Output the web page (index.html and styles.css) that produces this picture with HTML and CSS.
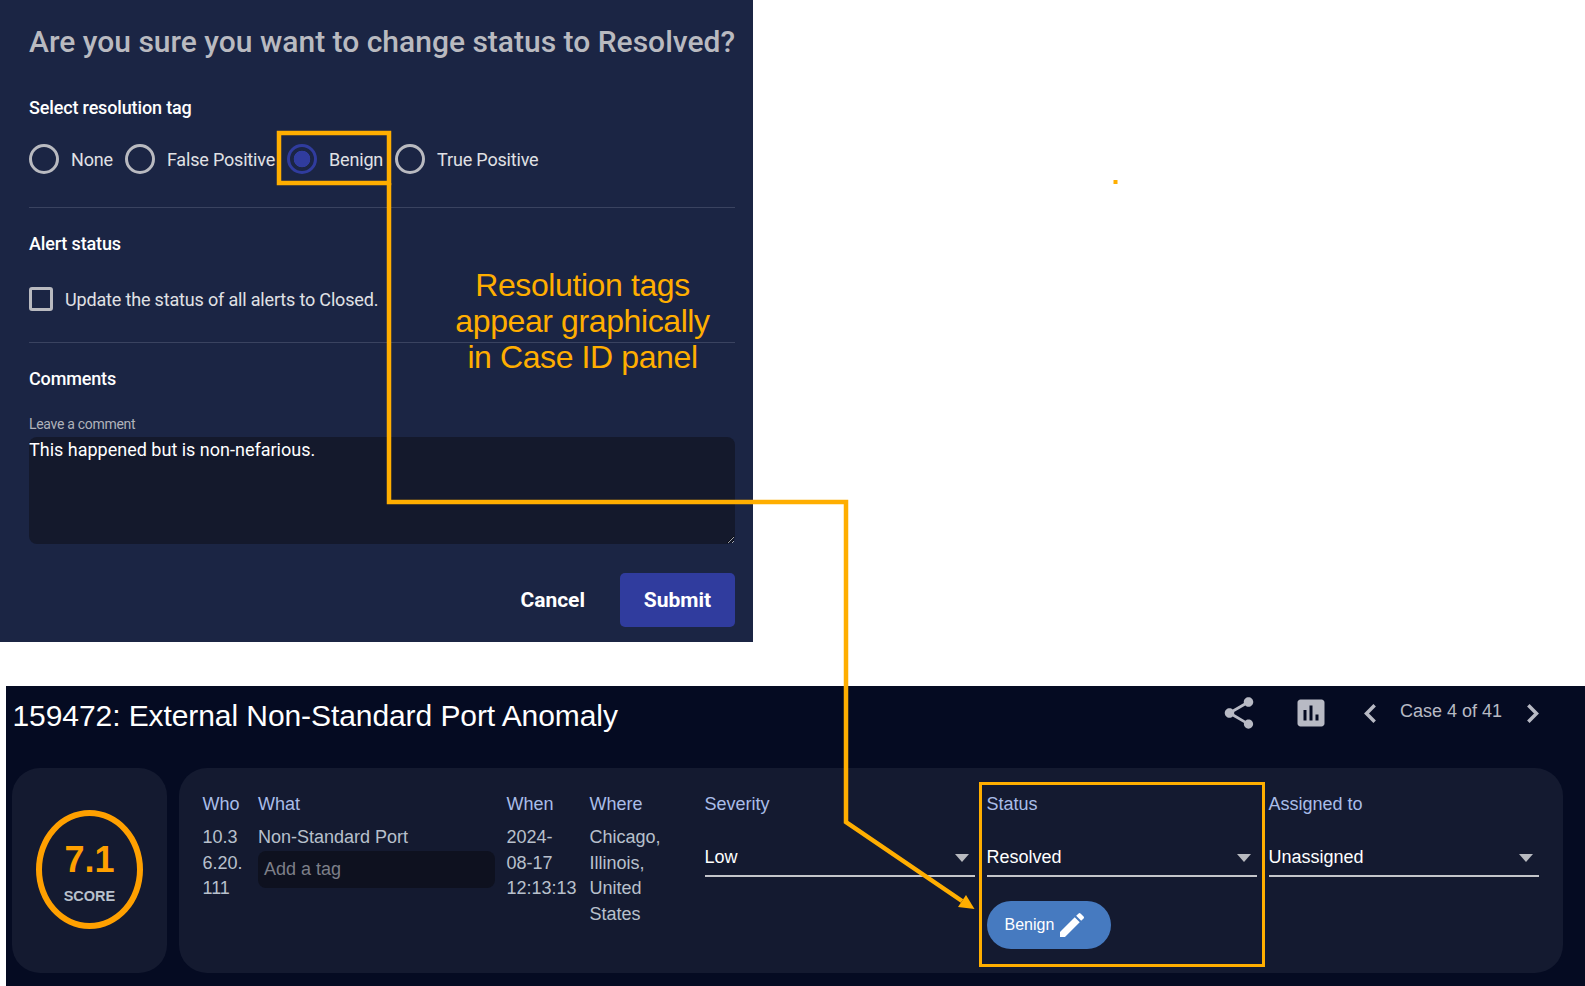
FILE: index.html
```html
<!DOCTYPE html>
<html lang="en">
<head>
<meta charset="utf-8">
<title>Change status</title>
<link rel="stylesheet" href="styles.css">
</head>
<body>
<section class="dialog">
  <h2 class="dialog-title">Are you sure you want to change status to Resolved?</h2>
  <h3 class="section-label first">Select resolution tag</h3>
  <div class="radios">
    <label class="radio"><span class="radio-dot"></span>None</label>
    <label class="radio"><span class="radio-dot"></span>False Positive</label>
    <label class="radio"><span class="radio-dot checked"></span>Benign</label>
    <label class="radio"><span class="radio-dot"></span>True Positive</label>
  </div>
  <hr class="rule">
  <h3 class="section-label">Alert status</h3>
  <label class="check"><span class="check-box"></span>Update the status of all alerts to Closed.</label>
  <hr class="rule">
  <h3 class="section-label">Comments</h3>
  <div class="field-label">Leave a comment</div>
  <textarea class="comment">This happened but is non-nefarious.</textarea>
  <div class="actions">
    <button class="btn-text">Cancel</button>
    <button class="btn-primary">Submit</button>
  </div>
</section>

<section class="case">
  <header class="case-head">
    <h1 class="case-title">159472: External Non-Standard Port Anomaly</h1>
    <div class="case-tools">
      <svg class="icon-share" viewBox="0 0 24 24"><path d="M18 16.08c-.76 0-1.44.3-1.96.77L8.91 12.7c.05-.23.09-.46.09-.7s-.04-.47-.09-.7l7.05-4.11c.54.5 1.25.81 2.04.81 1.66 0 3-1.34 3-3s-1.34-3-3-3-3 1.34-3 3c0 .24.04.47.09.7L8.04 9.81C7.5 9.31 6.79 9 6 9c-1.66 0-3 1.34-3 3s1.34 3 3 3c.79 0 1.5-.31 2.04-.81l7.12 4.16c-.05.21-.08.43-.08.65 0 1.61 1.31 2.92 2.92 2.92 1.61 0 2.92-1.31 2.92-2.92s-1.31-2.92-2.92-2.92z"/></svg>
      <svg class="icon-poll" viewBox="0 0 24 24"><path d="M19 3H5c-1.1 0-2 .9-2 2v14c0 1.1.9 2 2 2h14c1.1 0 2-.9 2-2V5c0-1.1-.9-2-2-2zM9 17H7v-7h2v7zm4 0h-2V7h2v10zm4 0h-2v-4h2v4z"/></svg>
      <svg class="icon-chev left" viewBox="0 0 12 18"><path d="M10 2 3 9l7 7"/></svg>
      <span class="case-count">Case 4 of 41</span>
      <svg class="icon-chev right" viewBox="0 0 12 18"><path d="m2 2 7 7-7 7"/></svg>
    </div>
  </header>
  <div class="case-body">
    <div class="score-card">
      <div class="score-ring">
        <span class="score-num">7.1</span>
        <span class="score-cap">SCORE</span>
      </div>
    </div>
    <div class="info-card">
      <div class="col who"><div class="col-head">Who</div><div class="col-text">10.3 6.20.111</div></div>
      <div class="col"><div class="col-head">What</div><div class="col-text">Non-Standard Port</div><div class="tag-input">Add a tag</div></div>
      <div class="col"><div class="col-head">When</div><div class="col-text">2024-08-17 12:13:13</div></div>
      <div class="col"><div class="col-head">Where</div><div class="col-text">Chicago, Illinois, United States</div></div>
      <div class="col"><div class="col-head">Severity</div><div class="select">Low</div></div>
      <div class="col"><div class="col-head">Status</div><div class="select">Resolved</div>
        <div class="pill">Benign<svg class="icon-edit" viewBox="0 0 24 24"><path d="M3 17.25V21h3.75L17.81 9.94l-3.75-3.75L3 17.25zM20.71 7.04a1 1 0 0 0 0-1.41l-2.34-2.34a1 1 0 0 0-1.41 0l-1.83 1.83 3.75 3.75 1.83-1.83z"/></svg></div>
      </div>
      <div class="col"><div class="col-head">Assigned to</div><div class="select">Unassigned</div></div>
    </div>
  </div>
</section>

<svg class="annot-lines" viewBox="0 0 1585 986">
  <rect class="annot-stroke" x="279" y="133" width="110" height="50"/>
  <path class="annot-stroke" d="M389 183V502H846V822L962 901"/>
  <path class="annot-fill" d="M958 907 966 895 974.5 909Z"/>
  <rect class="annot-thin" x="980.5" y="783.5" width="283" height="182"/>
  <rect class="annot-fill" x="1113.5" y="180" width="4" height="4"/>
</svg>
<p class="annot-text">Resolution tags<br>appear graphically<br>in Case ID panel</p>
</body>
</html>
```
FILE: styles.css
```css
* { box-sizing: border-box; }
html, body { margin: 0; padding: 0; }
body {
  position: relative;
  width: 1585px;
  height: 986px;
  overflow: hidden;
  background: #fff;
  font-family: "Liberation Sans", Arial, sans-serif;
}

/* Dialog */
.dialog {
  width: 753px;
  height: 642px;
  padding: 0 18px 0 29px;
  background: #1b2544;
  color: #fff;
  font-family: Roboto, sans-serif;
}
.dialog-title {
  margin: 0;
  padding-top: 24px;
  height: 85px;
  font-size: 30px;
  line-height: 36px;
  font-weight: 500;
  color: #b9bac0;
  white-space: nowrap;
}
.section-label {
  margin: 0;
  font-size: 18px;
  line-height: 24px;
  font-weight: 500;
  letter-spacing: -.15px;
}
.section-label.first { margin-top: 11px; }
.radios {
  display: flex;
  align-items: center;
  margin-top: 24px;
  height: 30px;
  font-size: 18px;
  letter-spacing: -.18px;
  color: #e0e1e5;
}
.radio { display: flex; align-items: center; white-space: nowrap; margin-right: 12px; }
.radio-dot {
  width: 30px;
  height: 30px;
  margin-right: 12px;
  border: 3px solid #b9bac0;
  border-radius: 50%;
}
.radio-dot.checked {
  border-color: #303c9e;
  background: radial-gradient(circle, #303c9e 0 8px, transparent 8.6px);
}
.rule {
  margin: 0;
  border: 0;
  height: 1px;
  background: #3a4360;
}
.radios + .rule { margin-top: 33px; }
.rule + .section-label { margin-top: 24px; }
.check {
  display: flex;
  align-items: center;
  margin-top: 31px;
  height: 24px;
  font-size: 18px;
  letter-spacing: -.17px;
  color: #e0e1e5;
}
.check-box {
  width: 24px;
  height: 24px;
  margin-right: 12px;
  border: 3px solid #b9bac0;
  border-radius: 3px;
}
.check + .rule { margin-top: 31px; }
.field-label {
  margin-top: 23px;
  font-size: 14px;
  line-height: 20px;
  letter-spacing: -.3px;
  color: #b0b2ba;
}
.comment {
  display: block;
  width: 706px;
  height: 107px;
  margin-top: 3px;
  padding: 0;
  border: 0;
  border-radius: 8px;
  outline: 0;
  background: #14192c;
  color: #fff;
  font: 400 18px/26px Roboto, sans-serif;
}
.actions {
  display: flex;
  justify-content: flex-end;
  align-items: center;
  gap: 35px;
  margin-top: 29px;
}
.btn-text, .btn-primary {
  border: 0;
  padding: 0;
  color: #fff;
  font: 700 21px/24px Roboto, sans-serif;
}
.btn-text { background: none; }
.btn-primary {
  width: 115px;
  height: 54px;
  border-radius: 5px;
  background: #303c9e;
}

/* Case panel */
.case {
  width: 1579px;
  height: 300px;
  margin: 44px 0 0 6px;
  padding-left: 6.5px;
  background: #050b22;
  color: #fff;
}
.case-head {
  display: flex;
  justify-content: space-between;
  height: 82px;
}
.case-title {
  margin: 0;
  padding-top: 12px;
  font-size: 30px;
  line-height: 36px;
  font-weight: 400;
  letter-spacing: -.08px;
  white-space: nowrap;
}
.case-tools {
  display: flex;
  align-items: center;
  height: 54px;
  margin-right: 45px;
  color: #b8bac4;
  fill: #b8bac4;
}
.icon-share { width: 38px; height: 38px; margin-right: 35px; }
.icon-poll { width: 36px; height: 36px; margin-right: 34px; }
.icon-chev {
  width: 14px;
  height: 21px;
  fill: none;
  stroke: #b8bac4;
  stroke-width: 3;
}
.case-count { margin: -5px 24px 0 23px; font-size: 18px; line-height: 22px; }
.case-body { display: flex; gap: 12px; margin-left: -.5px; }
.score-card {
  display: flex;
  justify-content: center;
  padding-top: 42px;
  width: 155px;
  height: 205px;
  border-radius: 28px;
  background: #141a30;
}
.score-ring {
  display: flex;
  flex-direction: column;
  align-items: center;
  width: 107px;
  height: 119px;
  padding-top: 24px;
  border: 6px solid #ffa000;
  border-radius: 50%;
}
.score-num { font-size: 36px; line-height: 40px; font-weight: 700; color: #ffa000; }
.score-cap { margin-top: 7px; font-size: 14.5px; line-height: 18px; font-weight: 700; color: #b8c0cc; }
.info-card {
  display: grid;
  grid-template-columns: 43.5px 236.5px 71px 103px 270px 270px 270px;
  column-gap: 12px;
  width: 1384px;
  height: 205px;
  padding: 24px 0 0 23.5px;
  border-radius: 28px;
  background: #141a30;
  font-size: 18px;
}
.col-head { line-height: 24px; color: #a9bde8; }
.col-text { margin-top: 9px; line-height: 25.5px; color: #b8c0cc; }
.who .col-text { word-break: break-all; }
.tag-input {
  height: 37px;
  margin-top: 0;
  padding: 0 6px;
  border-radius: 8px;
  background: #0e111f;
  line-height: 37px;
  color: #7d7f88;
}
.select {
  position: relative;
  height: 32px;
  margin-top: 29px;
  border-bottom: 2px solid #c4c5ca;
  line-height: 24px;
  color: #fff;
}
.select::after {
  content: "";
  position: absolute;
  right: 6px;
  top: 9px;
  border: 7px solid transparent;
  border-top: 8px solid #b8bac0;
  border-bottom: 0;
}
.pill {
  display: flex;
  align-items: center;
  width: 124px;
  height: 48px;
  margin-top: 24px;
  padding-left: 18px;
  border-radius: 24px;
  background: #467ac0;
  font-size: 16px;
  color: #fff;
}
.icon-edit { width: 32px; height: 32px; margin-left: 2px; fill: #fff; }

/* Annotations */
.annot-lines {
  position: absolute;
  left: 0;
  top: 0;
  width: 1585px;
  height: 986px;
  pointer-events: none;
}
.annot-stroke { fill: none; stroke: #ffae00; stroke-width: 4.5; }
.annot-thin { fill: none; stroke: #ffae00; stroke-width: 3; }
.annot-fill { fill: #ffae00; }
.annot-text {
  position: absolute;
  left: 432.5px;
  top: 267px;
  width: 300px;
  margin: 0;
  text-align: center;
  font-size: 32px;
  line-height: 36px;
  letter-spacing: -.4px;
  color: #ffae00;
}
```
